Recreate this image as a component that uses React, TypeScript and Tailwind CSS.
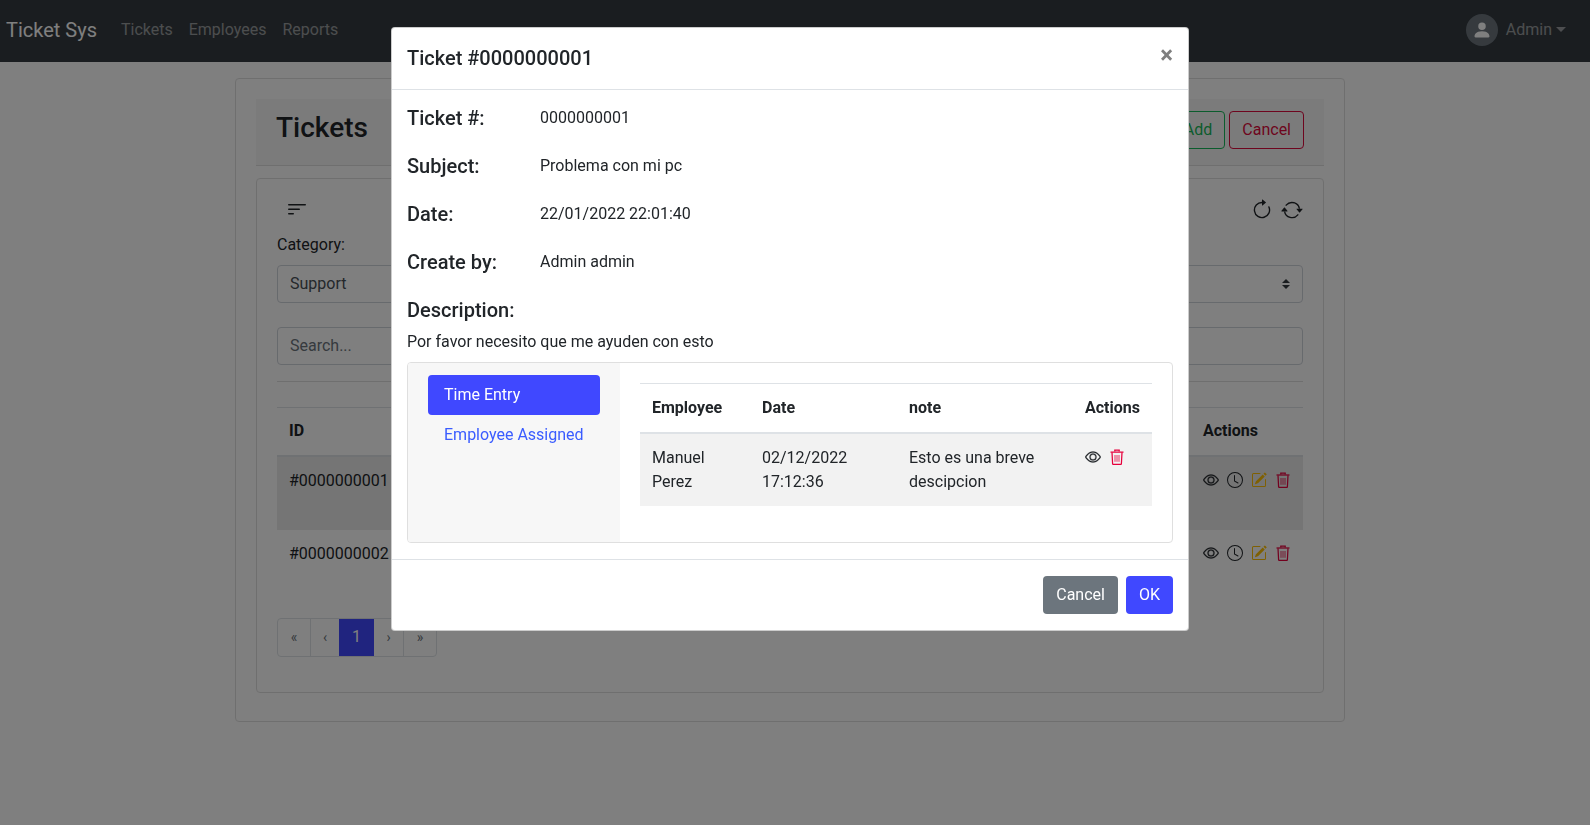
import { BsArrowClockwise, BsArrowRepeat, BsClock, BsEye, BsPencilSquare, BsFilterLeft, BsPersonFill } from "react-icons/bs"

const ticketIds = ["#0000000001", "#0000000002"]

function TrashIcon({ className }: { className?: string }) {
  return (
    <svg viewBox="0 0 16 16" fill="none" stroke="currentColor" strokeWidth="1.25" className={className}>
      <path d="M5.8 2.6V1h4.4v1.6" />
      <path d="M1.5 3h13" />
      <path d="M3 3.4l.6 11.4a.6.6 0 0 0 .6.5h7.6a.6.6 0 0 0 .6-.5L13 3.4" />
      <path d="M6 6v6.8M8 6v6.8M10 6v6.8" strokeWidth="0.8" />
    </svg>
  )
}

function RowActions() {
  return (
    <div className="flex items-center gap-2 text-[#212529]">
      <BsEye className="w-4 h-4 stroke-[0.3px]" />
      <BsClock className="w-4 h-4" />
      <BsPencilSquare className="w-4 h-4 text-[#ffc107]" />
      <TrashIcon className="w-4 h-4 text-[#e6003c]" />
    </div>
  )
}

function Navbar() {
  return (
    <nav className="h-[62px] bg-[#343a40] flex items-center justify-between pl-[6px] pr-6 pb-[2px]">
      <div className="flex items-center">
        <span className="text-xl text-white mr-4">Ticket Sys</span>
        <a className="px-2 text-white/50">Tickets</a>
        <a className="px-2 text-white/50">Employees</a>
        <a className="px-2 text-white/50">Reports</a>
      </div>
      <div className="flex items-center gap-2 text-white/50">
        <span className="w-8 h-8 rounded-full bg-[#6c757d] flex items-center justify-center text-white">
          <BsPersonFill className="w-5 h-5" />
        </span>
        <span>Admin</span>
        <span className="w-0 h-0 -ml-1 -mt-[2px] border-x-[5px] border-x-transparent border-t-[5px] border-t-white/50" />
      </div>
    </nav>
  )
}

function TicketsPage() {
  return (
    <div className="w-[1580px] flex justify-center pt-4">
      <div className="w-[1110px] h-[644px] border border-[#dfdfdf] rounded p-5">
        <div className="h-[67px] bg-[#f7f7f7] border-b border-[#dfdfdf] flex items-start justify-between pl-5 pr-5">
          <h3 className="text-[28px] font-medium text-[#212529] pt-2">Tickets</h3>
          <div className="flex gap-1 pt-3">
            <button className="h-[38px] px-3 border border-[#17b85a] text-[#17b85a] rounded">Add</button>
            <button className="h-[38px] px-3 border border-[#dc0a3c] text-[#dc0a3c] rounded">Cancel</button>
          </div>
        </div>

        <div className="mt-3 h-[515px] border border-[#dfdfdf] rounded px-5 text-[#212529]">
          <div className="flex items-start justify-between h-[50px]">
            <BsFilterLeft className="w-6 h-6 ml-2 mt-[19px]" />
            <div className="flex items-center gap-2 mt-5">
              <BsArrowClockwise className="w-[22px] h-[22px]" />
              <BsArrowRepeat className="w-[22px] h-[22px]" />
            </div>
          </div>
          <label className="block leading-6 mb-2 mt-1">Category:</label>
          <div className="h-[38px] border border-[#ced4da] rounded px-3 flex items-center justify-between text-[#495057]">
            <span>Support</span>
            <span className="flex flex-col gap-[2px]">
              <span className="w-0 h-0 border-x-[4px] border-x-transparent border-b-[4px] border-b-[#343a40]" />
              <span className="w-0 h-0 border-x-[4px] border-x-transparent border-t-[4px] border-t-[#343a40]" />
            </span>
          </div>
          <div className="mt-6 h-[38px] border border-[#ced4da] rounded px-3 flex items-center text-[#6c757d]">Search...</div>
          <hr className="mt-4 mb-[25px] border-[#dfdfdf]" />

          <table className="w-full table-fixed border-collapse">
            <thead>
              <tr className="border-t border-[#dee2e6] border-b-2 h-12">
                <th className="w-[120px] px-3 text-left font-bold">ID</th>
                <th className="px-3" />
                <th className="px-3" />
                <th className="w-[112px] px-3 text-left font-bold">Actions</th>
              </tr>
            </thead>
            <tbody>
              {ticketIds.map((id, i) => (
                <tr key={id} className={i === 0 ? "bg-[#ebebeb] h-[74px]" : "h-[72px]"}>
                  <td className="px-3 pt-3 align-top">{id}</td>
                  <td className="px-3" />
                  <td className="px-3" />
                  <td className="px-3 pt-[15px] align-top"><RowActions /></td>
                </tr>
              ))}
            </tbody>
          </table>

          <div className="mt-4 inline-flex h-[39px] border border-[#dee2e6] rounded text-[#6c757d] text-sm">
            <span className="w-[33px] flex items-center justify-center border-r border-[#dee2e6]">«</span>
            <span className="w-[28px] flex items-center justify-center">‹</span>
            <span className="w-[35px] flex items-center justify-center bg-[#4048ff] text-white text-base">1</span>
            <span className="w-[30px] flex items-center justify-center border-r border-[#dee2e6]">›</span>
            <span className="w-[32px] flex items-center justify-center">»</span>
          </div>
        </div>
      </div>
    </div>
  )
}

function InfoRow({ label, value }: { label: string; value: string }) {
  return (
    <div className="flex mb-6">
      <h5 className="w-[133px] text-xl leading-6 font-medium">{label}</h5>
      <span className="leading-6">{value}</span>
    </div>
  )
}

function TicketModal() {
  return (
    <div className="fixed inset-0 bg-black/50">
      <div className="absolute left-[391px] top-[27px] w-[798px] bg-white rounded border border-black/20 text-[#212529]">
        <div className="h-[62px] border-b border-[#dee2e6] flex items-center justify-between px-[15px]">
          <h5 className="text-xl font-medium -mt-[2px]">Ticket #0000000001</h5>
          <span className="text-2xl font-bold text-[#7f7f7f] leading-none -mt-2">×</span>
        </div>

        <div className="py-4 px-[15px]">
          <InfoRow label="Ticket #:" value="0000000001" />
          <InfoRow label="Subject:" value="Problema con mi pc" />
          <InfoRow label="Date:" value="22/01/2022 22:01:40" />
          <InfoRow label="Create by:" value="Admin admin" />
          <h5 className="text-xl leading-6 font-medium mb-2">Description:</h5>
          <p className="leading-6 mb-2">Por favor necesito que me ayuden con esto</p>

          <div className="h-[181px] border border-[#dfdfdf] rounded flex overflow-hidden">
            <div className="w-[212px] bg-[#f7f7f7] pt-3 px-5">
              <div className="h-10 bg-[#4048ff] text-white rounded px-4 flex items-center">Time Entry</div>
              <div className="h-10 text-[#3a5cff] px-4 flex items-center">Employee Assigned</div>
            </div>
            <div className="flex-1 px-5 pt-5">
              <table className="w-full table-fixed border-collapse">
                <thead>
                  <tr className="border-t border-[#dee2e6] border-b-2 h-[49px]">
                    <th className="w-[110px] px-3 text-left font-bold">Employee</th>
                    <th className="w-[147px] px-3 text-left font-bold">Date</th>
                    <th className="px-3 text-left font-bold">note</th>
                    <th className="w-[79px] px-3 text-left font-bold">Actions</th>
                  </tr>
                </thead>
                <tbody>
                  <tr className="bg-[#f2f2f2]">
                    <td className="px-3 py-3 align-top">Manuel Perez</td>
                    <td className="px-3 py-3 align-top">02/12/2022 17:12:36</td>
                    <td className="px-3 py-3 align-top">Esto es una breve descipcion</td>
                    <td className="px-3 pt-[15px] align-top">
                      <div className="flex items-center gap-2">
                        <BsEye className="w-4 h-4 stroke-[0.3px]" />
                        <TrashIcon className="w-4 h-4 text-[#e6003c]" />
                      </div>
                    </td>
                  </tr>
                </tbody>
              </table>
            </div>
          </div>
        </div>

        <div className="h-[71px] border-t border-[#dee2e6] flex items-center justify-end gap-2 px-[15px]">
          <button className="h-[38px] px-[13px] bg-[#6c757d] text-white rounded">Cancel</button>
          <button className="h-[38px] px-[13px] bg-[#4048ff] text-white rounded">OK</button>
        </div>
      </div>
    </div>
  )
}

export default function App() {
  return (
    <div className="min-h-[825px] bg-white font-['Roboto',sans-serif]">
      <Navbar />
      <TicketsPage />
      <TicketModal />
    </div>
  )
}
